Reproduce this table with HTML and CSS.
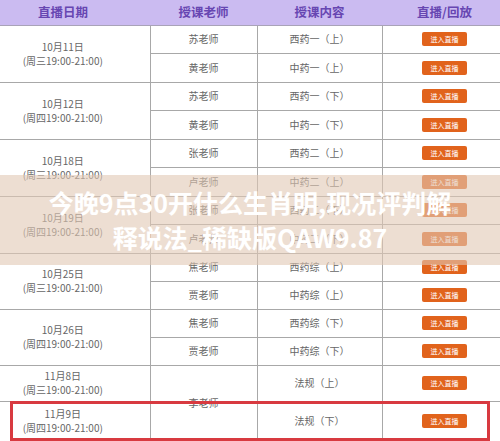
FILE: index.html
```html
<!DOCTYPE html>
<html lang="zh-CN">
<head>
<meta charset="utf-8">
<title>直播课表</title>
<link rel="stylesheet" href="styles.css">
</head>
<body>
<div class="page">
  <table class="schedule">
    <colgroup>
      <col class="c-date"><col class="c-teacher"><col class="c-topic"><col class="c-action">
    </colgroup>
    <thead>
      <tr class="head">
        <th>直播日期</th><th>授课老师</th><th>授课内容</th><th>直播/回放</th>
      </tr>
    </thead>
    <tbody>
      <tr class="r28"><td rowspan="2" class="date"><span>10月11日</span><span>(周三19:00-21:00)</span></td><td>苏老师</td><td>西药一（上）</td><td><span class="btn">进入直播</span></td></tr>
      <tr class="r29 gend"><td>黄老师</td><td>中药一（上）</td><td><span class="btn">进入直播</span></td></tr>
      <tr class="r28"><td rowspan="2" class="date"><span>10月12日</span><span>(周四19:00-21:00)</span></td><td>苏老师</td><td>西药一（下）</td><td><span class="btn">进入直播</span></td></tr>
      <tr class="r29 gend"><td>黄老师</td><td>中药一（下）</td><td><span class="btn">进入直播</span></td></tr>
      <tr class="r28"><td rowspan="2" class="date"><span>10月18日</span><span>(周三19:00-21:00)</span></td><td>张老师</td><td>西药二（上）</td><td><span class="btn">进入直播</span></td></tr>
      <tr class="r29 gend"><td>卢老师</td><td>中药二（上）</td><td><span class="btn">进入直播</span></td></tr>
      <tr class="r28"><td rowspan="2" class="date"><span>10月19日</span><span>(周四19:00-21:00)</span></td><td>张老师</td><td>西药二（下）</td><td><span class="btn">进入直播</span></td></tr>
      <tr class="r29 gend"><td>卢老师</td><td>中药二（下）</td><td><span class="btn">进入直播</span></td></tr>
      <tr class="r28"><td rowspan="2" class="date"><span>10月25日</span><span>(周三19:00-21:00)</span></td><td>焦老师</td><td>西药综（上）</td><td><span class="btn">进入直播</span></td></tr>
      <tr class="r28 gend"><td>贾老师</td><td>中药综（上）</td><td><span class="btn">进入直播</span></td></tr>
      <tr class="r28"><td rowspan="2" class="date"><span>10月26日</span><span>(周四19:00-21:00)</span></td><td>焦老师</td><td>西药综（下）</td><td><span class="btn">进入直播</span></td></tr>
      <tr class="r28 gend"><td>贾老师</td><td>中药综（下）</td><td><span class="btn">进入直播</span></td></tr>
      <tr class="r36"><td class="date"><span>11月8日</span><span>(周三19:00-21:00)</span></td><td rowspan="2">李老师</td><td>法规（上）</td><td><span class="btn">进入直播</span></td></tr>
      <tr class="r40"><td class="date"><span>11月9日</span><span>(周四19:00-21:00)</span></td><td>法规（下）</td><td><span class="btn">进入直播</span></td></tr>
    </tbody>
  </table>

  <div class="veil">
    <p class="veil-title">今晚9点30开什么生肖明,现况评判解<br>释说法_稀缺版QAW9.87</p>
  </div>
  <div class="highlight"></div>
</div>
</body>
</html>
```

FILE: styles.css
```css
html, body {
  margin: 0;
  padding: 0;
  overflow: hidden;
  background: #ffffff;
}

body {
  width: 500px;
  height: 441px;
  font-family: "Noto Sans CJK SC", "Noto Sans", "Liberation Sans", sans-serif;
}

.page {
  position: relative;
  width: 500px;
  height: 441px;
  overflow: hidden;
}

.schedule {
  margin-left: -24px;
  width: 531px;
  table-layout: fixed;
  border-collapse: collapse;
}

.c-date { width: 174px; }
.c-teacher { width: 107px; }
.c-topic { width: 125px; }
.c-action { width: 125px; }

.head {
  height: 25px;
  background: #cbbbf1;
}

.head th {
  padding: 0;
  font-size: 12.5px;
  font-weight: 700;
  color: #6746b2;
  text-align: center;
  border-bottom: 1px solid #a9a3b8;
  line-height: 24px;
}

td {
  padding: 0;
  border: 1px solid #a8a8a8;
  text-align: center;
  vertical-align: middle;
  font-size: 10px;
  color: #666;
  line-height: 12px;
}

.r28 { height: 28px; }
.r29 { height: 29px; }
.r36 { height: 36px; }
.r40 { height: 40px; }

.date {
  border-left: none;
}

.date span {
  display: block;
  font-size: 10px;
  line-height: 14px;
  color: #666;
}

.btn {
  display: inline-block;
  width: 45px;
  height: 14px;
  line-height: 14px;
  border-radius: 2px;
  background: #e1631c;
  color: #fff;
  font-size: 7px;
}

.veil {
  position: absolute;
  left: 0;
  top: 175px;
  width: 500px;
  height: 90px;
  background: rgba(225, 200, 180, 0.6);
  display: flex;
  align-items: center;
  justify-content: center;
}

.veil-title {
  margin: 0;
  text-align: center;
  color: #ffffff;
  font-size: 25px;
  font-weight: 700;
  line-height: 35px;
}

.highlight {
  position: absolute;
  left: 10px;
  top: 401px;
  width: 474px;
  height: 34px;
  border: 3px solid #d83a40;
}
```
